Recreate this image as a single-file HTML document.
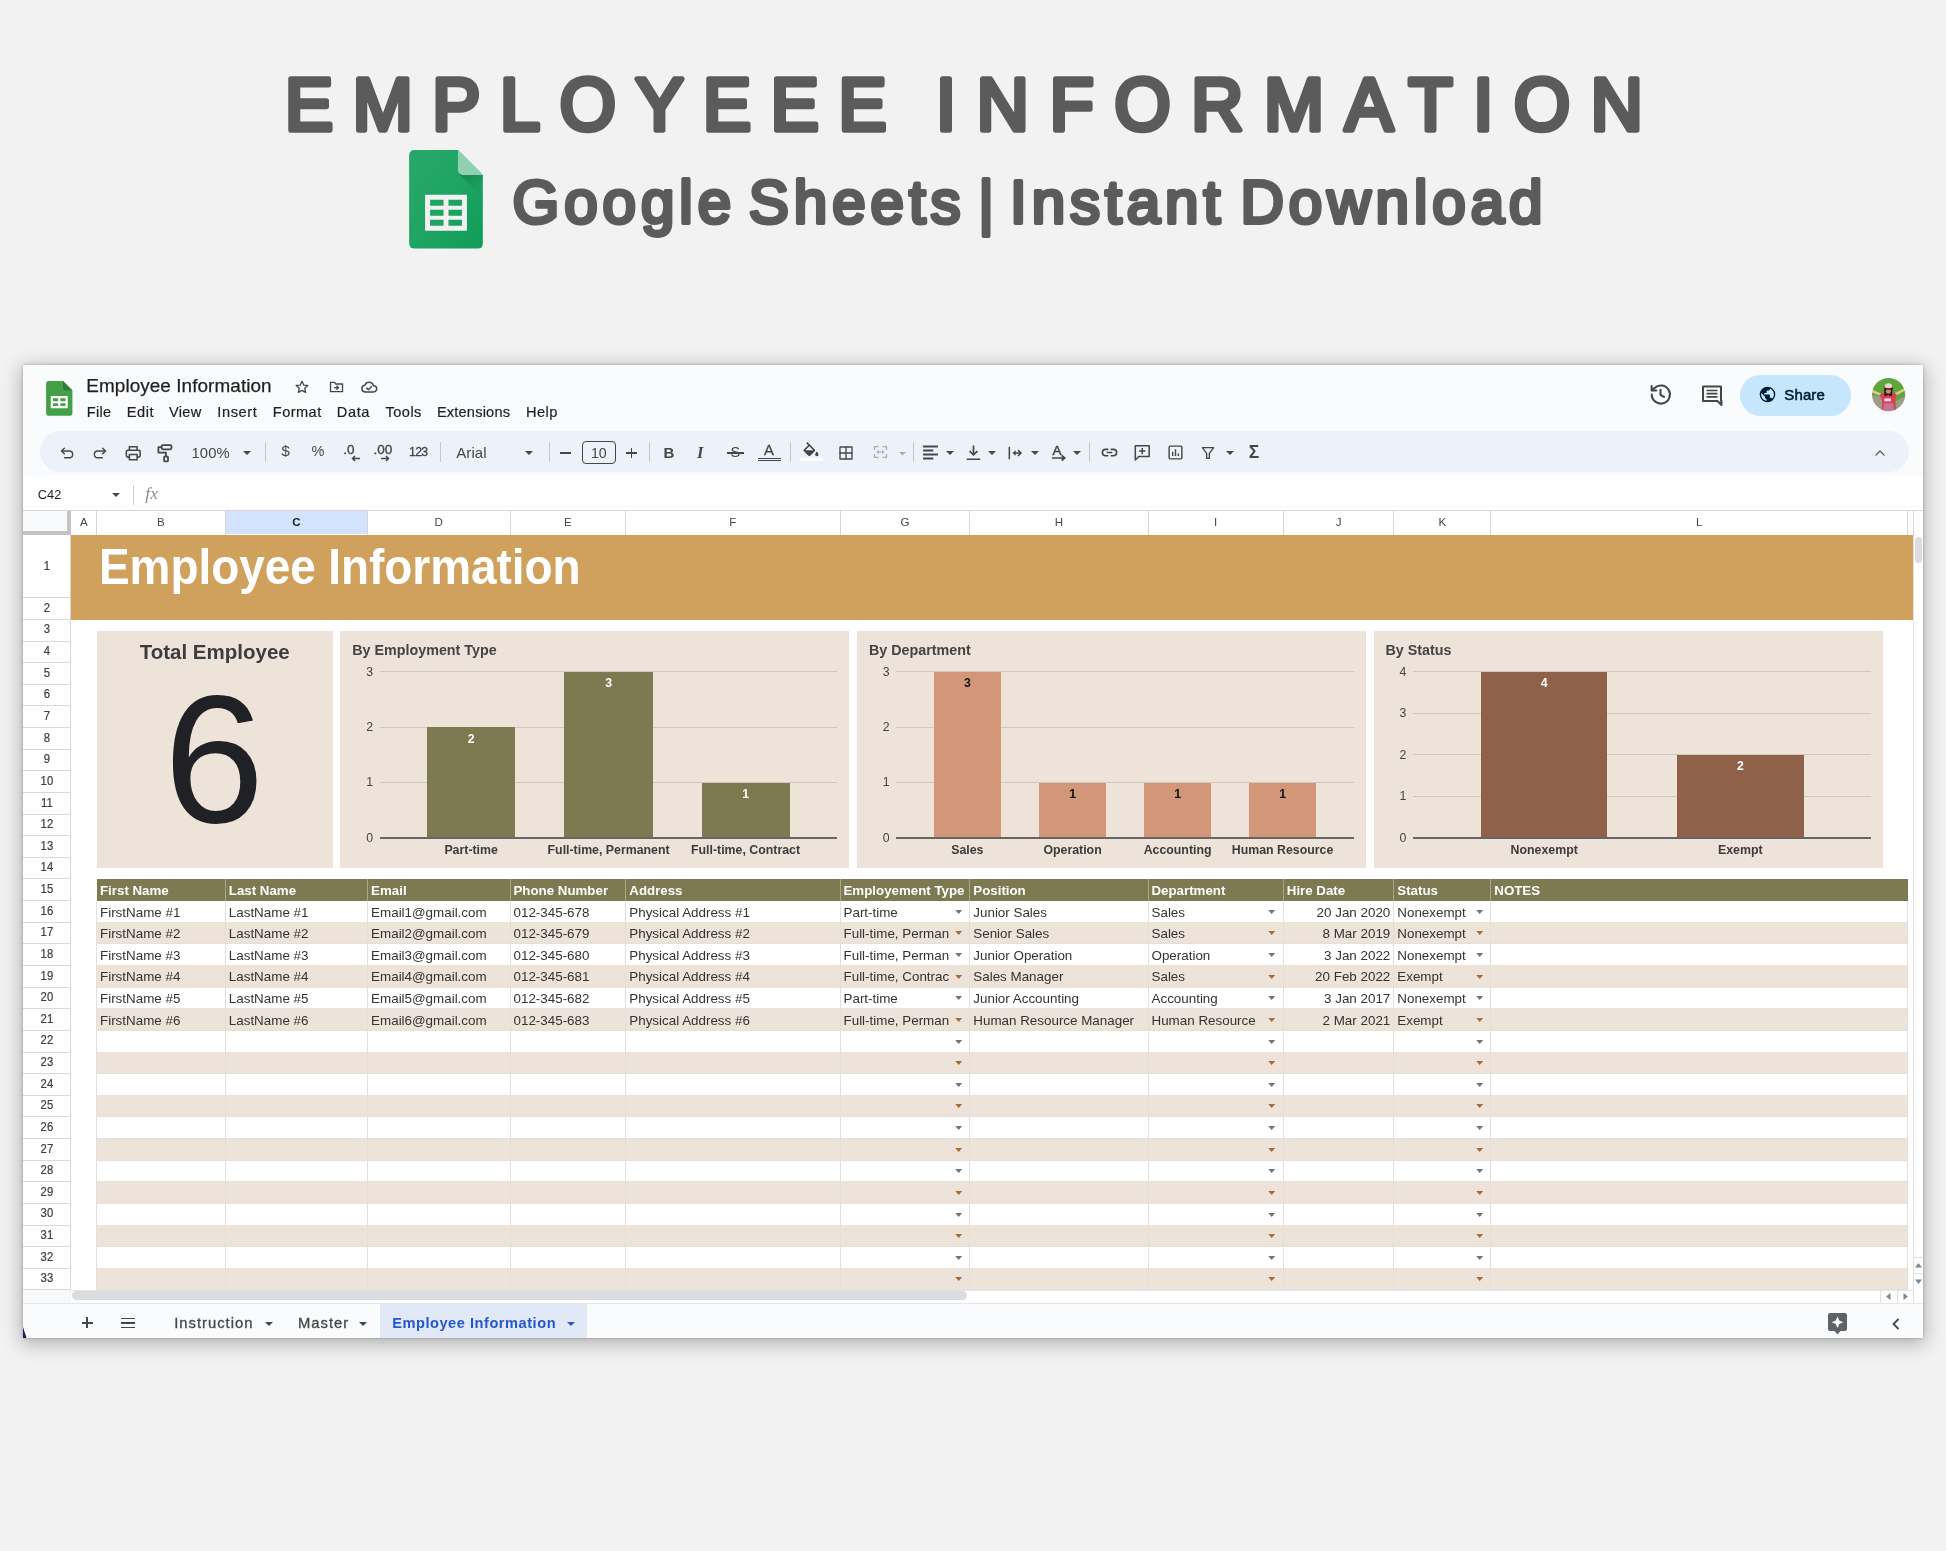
<!DOCTYPE html><html lang="en"><head><meta charset="utf-8"><title>Employee Information</title><style>
*{box-sizing:border-box;margin:0;padding:0}
html,body{width:1946px;height:1551px;overflow:hidden}
body{background:#f2f2f2;font-family:"Liberation Sans",sans-serif;position:relative;color:#202124}
.a{position:absolute;white-space:pre}
.t{position:absolute;white-space:pre;line-height:1}
svg{position:absolute;overflow:visible}
</style></head><body><div id="root" style="position:absolute;left:0;top:0;width:1946px;height:1551px;will-change:transform">
<svg style="left:0;top:0" width="1946" height="300" viewBox="0 0 1946 300">
<g transform="translate(285,129.5) scale(0.96,1)"><text x="0" y="0" font-family="Liberation Sans, sans-serif" font-size="75" letter-spacing="20.5" fill="#5b5b5b" stroke="#5b5b5b" stroke-width="5.5" stroke-linejoin="round">EMPLOYEEE</text></g>
<g transform="translate(936,129.5) scale(0.96,1)"><text x="0" y="0" font-family="Liberation Sans, sans-serif" font-size="75" letter-spacing="21.7" fill="#5b5b5b" stroke="#5b5b5b" stroke-width="5.5" stroke-linejoin="round">INFORMATION</text></g>
<g transform="translate(512.5,223) scale(0.97,1)"><text x="0" y="0" font-family="Liberation Sans, sans-serif" font-size="62" letter-spacing="5.1" word-spacing="-9.3" fill="#5b5b5b" stroke="#5b5b5b" stroke-width="4.1" stroke-linejoin="round">Google Sheets |</text></g>
<g transform="translate(1010,223) scale(0.97,1)"><text x="0" y="0" font-family="Liberation Sans, sans-serif" font-size="62" letter-spacing="5.1" word-spacing="-6.5" fill="#5b5b5b" stroke="#5b5b5b" stroke-width="4.1" stroke-linejoin="round">Instant Download</text></g>
</svg>
<svg style="left:409px;top:150.400px" width="74" height="98.600" viewBox="0 0 74 99">
<defs><linearGradient id="gsb" x1="0" y1="0" x2="1" y2="1"><stop offset="0" stop-color="#27a86a"/><stop offset=".5" stop-color="#1fa463"/><stop offset="1" stop-color="#0f9d58"/></linearGradient>
<linearGradient id="gss" x1="0.300" y1="0" x2="0.800" y2="0.700"><stop offset="0" stop-color="#0b6e3c" stop-opacity=".45"/><stop offset="1" stop-color="#0b6e3c" stop-opacity="0"/></linearGradient></defs>
<path d="M5 0H49L74 25V94a5 5 0 0 1-5 5H5a5 5 0 0 1-5-5V5a5 5 0 0 1 5-5z" fill="url(#gsb)"/>
<path d="M50 24L74 47V25z" fill="url(#gss)"/>
<path d="M49 0L74 25H54a5 5 0 0 1-5-5z" fill="#8ed1b1"/>
<path d="M16 45v36h42V45zm5 5h13.500v6H21zm18.500 0H53v6H39.500zM21 60h13.500v6H21zm18.500 0H53v6H39.500zM21 70h13.500v6H21zm18.500 0H53v6H39.500z" fill="#f1f1f1" fill-rule="evenodd"/>
</svg>
<div class="a" style="left:23px;top:365px;width:1900px;height:973px;background:#ffffff;box-shadow:0 4px 18px 2px rgba(0,0,0,.27),0 0 3px rgba(0,0,0,.25);"></div>
<div class="a" style="left:23px;top:365px;width:1900px;height:111px;background:#f9fbfd;"></div>
<svg style="left:45.800px;top:381px" width="26.500" height="34.800" viewBox="0 0 28 37">
<path d="M3 0H18L28 10V34a3 3 0 0 1-3 3H3a3 3 0 0 1-3-3V3a3 3 0 0 1 3-3z" fill="#43a047"/>
<path d="M18 0L28 10H20.500a2.500 2.500 0 0 1-2.500-2.500z" fill="#2e7d32"/>
<path d="M5 16v13h18V16zm2.300 2.300h5.500v3.100H7.300zm7.900 0h5.500v3.100h-5.500zM7.300 23.600h5.500v3.100H7.300zm7.900 0h5.500v3.100h-5.500z" fill="#fff" fill-rule="evenodd"/>
</svg>
<div class="t" style="left:86.3px;top:377px;font-size:18.9px;color:#1f1f1f;letter-spacing:0.081px;-webkit-text-stroke:.25px #1f1f1f;">Employee Information</div>
<svg style="left:294px;top:378.800px" width="16" height="16" viewBox="0 0 24 24" fill="none" stroke="#444746" stroke-width="2" stroke-linejoin="round"><path d="M12 3.500l2.600 5.600 6.100.700-4.500 4.200 1.200 6-5.400-3-5.400 3 1.200-6L3.300 9.800l6.100-.700z"/></svg>
<svg style="left:328px;top:378.800px" width="17" height="16" viewBox="0 0 24 24" fill="none" stroke="#444746" stroke-width="2" stroke-linejoin="round"><path d="M3 5h6l2 2.500h10V19H3z"/><path d="M9 13h6m-2.500-2.500L15 13l-2.500 2.500" stroke-linecap="round"/></svg>
<svg style="left:359px;top:377.800px" width="20" height="18" viewBox="0 0 24 24" fill="none" stroke="#444746" stroke-width="2" stroke-linejoin="round" stroke-linecap="round"><path d="M7 18.500a4.500 4.500 0 0 1-.500-8.970A6 6 0 0 1 18 10.500a4 4 0 0 1 .500 8z"/><path d="M9 13.500l2.200 2.200 4-4"/></svg>
<div class="t" style="left:86.8px;top:404.6px;font-size:14.6px;color:#1f1f1f;letter-spacing:0.295px;-webkit-text-stroke:.2px #1f1f1f;">File</div>
<div class="t" style="left:126.7px;top:404.6px;font-size:14.6px;color:#1f1f1f;letter-spacing:0.548px;-webkit-text-stroke:.2px #1f1f1f;">Edit</div>
<div class="t" style="left:169.0px;top:404.6px;font-size:14.6px;color:#1f1f1f;letter-spacing:0.308px;-webkit-text-stroke:.2px #1f1f1f;">View</div>
<div class="t" style="left:217.3px;top:404.6px;font-size:14.6px;color:#1f1f1f;letter-spacing:0.580px;-webkit-text-stroke:.2px #1f1f1f;">Insert</div>
<div class="t" style="left:272.8px;top:404.6px;font-size:14.6px;color:#1f1f1f;letter-spacing:0.436px;-webkit-text-stroke:.2px #1f1f1f;">Format</div>
<div class="t" style="left:336.7px;top:404.6px;font-size:14.6px;color:#1f1f1f;letter-spacing:0.657px;-webkit-text-stroke:.2px #1f1f1f;">Data</div>
<div class="t" style="left:385.6px;top:404.6px;font-size:14.6px;color:#1f1f1f;letter-spacing:0.430px;-webkit-text-stroke:.2px #1f1f1f;">Tools</div>
<div class="t" style="left:436.90000000000003px;top:404.6px;font-size:14.6px;color:#1f1f1f;letter-spacing:0.190px;-webkit-text-stroke:.2px #1f1f1f;">Extensions</div>
<div class="t" style="left:526.0999999999999px;top:404.6px;font-size:14.6px;color:#1f1f1f;letter-spacing:0.428px;-webkit-text-stroke:.2px #1f1f1f;">Help</div>
<svg style="left:1648px;top:382px" width="25" height="25" viewBox="0 0 24 24" fill="none" stroke="#444746" stroke-width="2" stroke-linecap="round" stroke-linejoin="round"><path d="M3.600 12a8.700 8.700 0 1 0 2.700-6.300L3.800 8"/><path d="M3.500 3.800V8.200H8"/><path d="M12 7.500V12.300l3.300 2"/></svg>
<svg style="left:1700px;top:383px" width="24" height="24" viewBox="0 0 24 24"><path d="M3 3.500h18v14.500H21.500V22l-4-4H3z" fill="none" stroke="#444746" stroke-width="2" stroke-linejoin="round"/><path d="M6.500 7.500h11M6.500 10.700h11M6.500 13.900h11" stroke="#444746" stroke-width="1.700"/></svg>
<div class="a" style="left:1740.3px;top:374.5px;width:110.5px;height:41px;background:#c6e6fd;border-radius:21px;"></div>
<svg style="left:1758.500px;top:386px" width="17" height="17" viewBox="0 0 24 24"><circle cx="12" cy="12" r="11" fill="#001d35"/><path d="M10.800 20.900c-4.400-.600-7.800-4.400-7.800-8.900 0-.700.100-1.400.200-2L8.500 15.300v1.100c0 1.200 1 2.200 2.300 2.200zm7.800-2.800c-.300-.900-1.100-1.600-2.100-1.600h-1.100v-3.400c0-.600-.500-1.100-1.100-1.100H7.500V9.800h2.300c.600 0 1.100-.500 1.100-1.100V6.400h2.300c1.200 0 2.200-1 2.200-2.200v-.500c3.300 1.300 5.600 4.600 5.600 8.300 0 2.400-.900 4.500-2.400 6.100z" fill="#c2e7ff"/></svg>
<div class="t" style="left:1784.3px;top:387.3px;font-size:15px;color:#001d35;letter-spacing:0.117px;-webkit-text-stroke:.55px #001d35;">Share</div>
<svg style="left:1871.800px;top:378.300px" width="33.200" height="33.200" viewBox="0 0 33 33"><defs><clipPath id="av"><circle cx="16.500" cy="16.500" r="16.500"/></clipPath><filter id="avb" x="-10%" y="-10%" width="120%" height="120%"><feGaussianBlur stdDeviation=".55"/></filter></defs><g clip-path="url(#av)"><g filter="url(#avb)"><rect x="-2" y="-2" width="37" height="37" fill="#5fa53a"/><path d="M-2 17.500C4 16.500 8 19 10 20v15h-12zM35 19c-5 0-8 2-11 4v12h11z" fill="#9c9c8c"/><path d="M0 13l8.500 3.500M32 11.500L24 16" stroke="#dcc98e" stroke-width="2.600" stroke-linecap="round" fill="none"/><path d="M7.500 16.500l4-1.500h9.500l3.500 .8-1.500 6 .5 12H9.500l.8-11z" fill="#e23b57"/><path d="M12 25h9l1 9h-11z" fill="#b58aa8" opacity=".8"/><path d="M12.300 20.500h6.500v2.500h-6.500z" fill="#f6e4ea"/><path d="M12.200 10.500h8.200v2l-.5 5.500h-2l-1.800-1.500-1.800 1.500h-2z" fill="#2b1715"/><circle cx="16.300" cy="13.200" r="2.500" fill="#c9896a"/><ellipse cx="16.400" cy="7.800" rx="3.500" ry="2.700" fill="#ecd3d6"/><path d="M11.800 9.400q4.600 1.800 9.300 0v1.500q-4.600 1.600-9.300 0z" fill="#4a2326"/></g></g></svg>
<div class="a" style="left:40px;top:430.8px;width:1869px;height:41.6px;background:#edf2fa;border-radius:21px;"></div>
<svg style="left:59.1px;top:445.0px" width="17" height="17" viewBox="0 0 24 24" fill="none" stroke="#444746" stroke-width="2" stroke-linecap="round" stroke-linejoin="round" ><path d="M7.500 4.500L3.500 8.500l4 4"/><path d="M4 8.500h10.500a4.750 4.750 0 0 1 0 9.500H8"/></svg>
<svg style="left:90.7px;top:445.0px" width="17" height="17" viewBox="0 0 24 24" fill="none" stroke="#444746" stroke-width="2" stroke-linecap="round" stroke-linejoin="round" ><path d="M16.500 4.500l4 4-4 4"/><path d="M20 8.500H9.500a4.750 4.750 0 0 0 0 9.500H16"/></svg>
<svg style="left:123.8px;top:443.8px" width="18.5" height="18.5" viewBox="0 0 24 24" fill="none" stroke="#444746" stroke-width="2" stroke-linecap="round" stroke-linejoin="round" ><path d="M7 8V3.500h10V8"/><rect x="3" y="8" width="18" height="9" rx="2"/><rect x="7" y="13.500" width="10" height="7" fill="#edf2fa"/></svg>
<svg style="left:156px;top:443px" width="18" height="20" viewBox="156 443 18 20" fill="none" stroke="#444746" stroke-width="1.800" stroke-linejoin="round"><rect x="161.600" y="445.200" width="9.900" height="4.100" rx="1.200"/><path d="M161.600 447.200H158.400V452.600H165.900V456.500"/><rect x="164.100" y="456.500" width="3.900" height="4.900" rx="1"/></svg>
<div class="t" style="left:191.4px;top:446.4px;font-size:14.8px;color:#444746;letter-spacing:0.147px;">100%</div>
<svg style="left:242.8px;top:451.3px" width="8" height="4.0" viewBox="0 0 10 5"><path d="M0 0h10L5 5z" fill="#444746"/></svg>
<div class="a" style="left:264.9px;top:442.0px;width:1px;height:20px;background:#c7c7c7;"></div>
<div class="t" style="left:281.6px;top:443.0px;font-size:15px;color:#444746;">$</div>
<div class="t" style="left:311.6px;top:444.0px;font-size:14.5px;color:#444746;">%</div>
<div class="t" style="left:343.3px;top:442.8px;font-size:13.5px;color:#444746;-webkit-text-stroke:.35px #444746;">.0</div>
<svg style="left:351px;top:455px" width="9" height="7" viewBox="0 0 9 7" fill="none" stroke="#444746" stroke-width="1.500"><path d="M9 3.500H1.500M4 1L1.500 3.500 4 6"/></svg>
<div class="t" style="left:373.6px;top:442.8px;font-size:13.5px;color:#444746;-webkit-text-stroke:.35px #444746;">.00</div>
<svg style="left:381px;top:455px" width="9" height="7" viewBox="0 0 9 7" fill="none" stroke="#444746" stroke-width="1.500"><path d="M0 3.500h7.500M5 1l2.500 2.500L5 6"/></svg>
<div class="t" style="left:409px;top:446.2px;font-size:12.3px;color:#444746;letter-spacing:-0.666px;-webkit-text-stroke:.3px #444746;">123</div>
<div class="a" style="left:439.5px;top:442.0px;width:1px;height:20px;background:#c7c7c7;"></div>
<div class="t" style="left:456.3px;top:445.2px;font-size:15px;color:#444746;letter-spacing:0.046px;">Arial</div>
<svg style="left:524.8px;top:451.3px" width="8" height="4.0" viewBox="0 0 10 5"><path d="M0 0h10L5 5z" fill="#444746"/></svg>
<div class="a" style="left:548.5px;top:442.0px;width:1px;height:20px;background:#c7c7c7;"></div>
<div class="a" style="left:560.3px;top:452px;width:10.4px;height:1.9px;background:#444746;"></div>
<div class="a" style="left:581.7px;top:440.6px;width:34.3px;height:23.7px;background:transparent;border:1.300px solid #444746;border-radius:4px;"></div>
<div class="t" style="left:298.79999999999995px;width:600px;text-align:center;top:445.60px;font-size:14.2px;color:#444746;">10</div>
<div class="a" style="left:626.2px;top:452px;width:10.6px;height:1.9px;background:#444746;"></div>
<div class="a" style="left:630.55px;top:447.7px;width:1.9px;height:10.6px;background:#444746;"></div>
<div class="a" style="left:648.5px;top:442.0px;width:1px;height:20px;background:#c7c7c7;"></div>
<div class="t" style="left:663.5px;top:444.5px;font-size:15px;color:#444746;font-weight:bold;">B</div>
<div class="t" style="left:697px;top:444.5px;font-size:15px;color:#444746;font-style:italic;font-family:'Liberation Serif',serif;font-weight:bold;font-size:16.500px">I</div>
<div class="t" style="left:730.5px;top:445px;font-size:14.5px;color:#444746;">S</div>
<div class="a" style="left:727px;top:452px;width:16.5px;height:1.5px;background:#444746;"></div>
<div class="t" style="left:764.0px;top:443.3px;font-size:14.8px;color:#444746;-webkit-text-stroke:.3px #444746;">A</div>
<div class="a" style="left:757.6px;top:458.0px;width:23.4px;height:1.4px;background:#444746;"></div>
<div class="a" style="left:757.6px;top:460.1px;width:23.4px;height:1.4px;background:#444746;"></div>
<div class="a" style="left:790.1px;top:442.0px;width:1px;height:20px;background:#c7c7c7;"></div>
<svg style="left:800.800px;top:441.600px" width="20" height="20" viewBox="0 0 24 24"><path d="M16.560 8.940 7.620 0 6.210 1.410l2.380 2.380-5.150 5.150c-.590.590-.590 1.540 0 2.120l5.500 5.500c.290.290.680.440 1.060.440s.770-.150 1.060-.440l5.500-5.500c.590-.580.590-1.530 0-2.120zM5.210 10 10 5.210 14.790 10H5.210zM19 11.500s-2 2.170-2 3.500c0 1.100.900 2 2 2s2-.900 2-2c0-1.330-2-3.500-2-3.500z" fill="#444746"/></svg>
<div class="a" style="left:799.8px;top:458.2px;width:23.4px;height:3.2px;background:#ffffff;"></div>
<svg style="left:837.5px;top:444.8px" width="16" height="16" viewBox="0 0 24 24" fill="none" stroke="#444746" stroke-width="2" stroke-linecap="round" stroke-linejoin="round" ><rect x="3" y="3" width="18" height="18"/><path d="M12 3v18M3 12h18"/></svg>
<svg style="left:872px;top:444.300px" width="17" height="16" viewBox="0 0 24 24" fill="none" stroke="#a9acb0" stroke-width="2"><path d="M3 9V4h6M15 4h6v5M21 15v5h-6M9 20H3v-5" /><path d="M7 12h10M9.500 9.500L7 12l2.500 2.500M14.500 9.500L17 12l-2.500 2.500" stroke-width="1.600"/></svg>
<svg style="left:899.0px;top:451.6px" width="7" height="3.5" viewBox="0 0 10 5"><path d="M0 0h10L5 5z" fill="#a9acb0"/></svg>
<div class="a" style="left:912.5px;top:442.0px;width:1px;height:20px;background:#c7c7c7;"></div>
<svg style="left:922.4px;top:444.0px" width="17" height="17" viewBox="0 0 24 24" fill="none" stroke="#444746" stroke-width="2" stroke-linecap="round" stroke-linejoin="round" ><path d="M1.500 3.500h21M1.500 9.200h14.500M1.500 14.800h21M1.500 20.500h14.500" stroke-linecap="butt" stroke-width="2.700"/></svg>
<svg style="left:945.8px;top:451.3px" width="8" height="4.0" viewBox="0 0 10 5"><path d="M0 0h10L5 5z" fill="#444746"/></svg>
<svg style="left:965.0px;top:444.0px" width="17" height="17" viewBox="0 0 24 24" fill="none" stroke="#444746" stroke-width="2" stroke-linecap="round" stroke-linejoin="round" ><path d="M12 2v13M6.500 10l5.500 5.500L17.500 10M2.500 21.500h19" stroke-linecap="butt" stroke-width="2.400"/></svg>
<svg style="left:988.0px;top:451.3px" width="8" height="4.0" viewBox="0 0 10 5"><path d="M0 0h10L5 5z" fill="#444746"/></svg>
<svg style="left:1006.7px;top:444.8px" width="16" height="16" viewBox="0 0 24 24" fill="none" stroke="#444746" stroke-width="2" stroke-linecap="round" stroke-linejoin="round" ><path d="M3.500 2.500v19M8.500 12h12.500M16.500 7.500l4.500 4.500-4.500 4.500M12 8.500v7" stroke-linecap="butt" stroke-width="2.300"/></svg>
<svg style="left:1030.5px;top:451.3px" width="8" height="4.0" viewBox="0 0 10 5"><path d="M0 0h10L5 5z" fill="#444746"/></svg>
<div class="t" style="left:1052.6px;top:443.6px;font-size:13.5px;color:#444746;-webkit-text-stroke:.5px #444746;">A</div>
<svg style="left:1051.500px;top:454.600px" width="15" height="6" viewBox="0 0 15 6" fill="none" stroke="#444746" stroke-width="1.700"><path d="M0 3h12.500M9.700 .5l3 2.500-3 2.500"/></svg>
<svg style="left:1072.5px;top:451.3px" width="8" height="4.0" viewBox="0 0 10 5"><path d="M0 0h10L5 5z" fill="#444746"/></svg>
<div class="a" style="left:1089.2px;top:442.0px;width:1px;height:20px;background:#c7c7c7;"></div>
<svg style="left:1099.5px;top:443.3px" width="19" height="19" viewBox="0 0 24 24" fill="none" stroke="#444746" stroke-width="2" stroke-linecap="round" stroke-linejoin="round" ><path d="M10.500 8H7a4 4 0 0 0 0 8h3.500M13.500 8H17a4 4 0 0 1 0 8h-3.500M8.500 12h7" stroke-linecap="butt"/></svg>
<svg style="left:1133.3px;top:443.4px" width="18.5" height="18.5" viewBox="0 0 24 24" fill="none" stroke="#444746" stroke-width="2" stroke-linecap="round" stroke-linejoin="round" ><path d="M3 3.500h18v14H7.500L3 22z"/><path d="M12 6.500v8M8 10.500h8" stroke-linecap="butt"/></svg>
<svg style="left:1166.8px;top:444.3px" width="17" height="17" viewBox="0 0 24 24" fill="none" stroke="#444746" stroke-width="2" stroke-linecap="round" stroke-linejoin="round" ><rect x="3" y="3" width="18" height="18" rx="1.500"/><path d="M8 17v-6M12 17V7.500M16 17v-3.500" stroke-linecap="butt"/></svg>
<svg style="left:1199.8px;top:444.8px" width="16" height="16" viewBox="0 0 24 24" fill="none" stroke="#444746" stroke-width="2" stroke-linecap="round" stroke-linejoin="round" ><path d="M3.500 4h17l-6.500 8.500V20h-4v-7.500z"/></svg>
<svg style="left:1226.0px;top:451.3px" width="8" height="4.0" viewBox="0 0 10 5"><path d="M0 0h10L5 5z" fill="#444746"/></svg>
<div class="t" style="left:1248.8px;top:444.2px;font-size:17.5px;color:#444746;font-weight:bold;">Σ</div>
<svg style="left:1872.6px;top:445.8px" width="14" height="14" viewBox="0 0 24 24" fill="none" stroke="#444746" stroke-width="2" stroke-linecap="round" stroke-linejoin="round" ><path d="M5 15.500l7-7 7 7"/></svg>
<div class="a" style="left:23px;top:476px;width:1900px;height:34px;background:#ffffff;"></div>
<div class="t" style="left:37.8px;top:488.5px;font-size:12.8px;color:#1f1f1f;width:24.200px;text-align:justify;text-align-last:justify;">C42</div>
<svg style="left:112.3px;top:492.8px" width="8" height="4.0" viewBox="0 0 10 5"><path d="M0 0h10L5 5z" fill="#444746"/></svg>
<div class="a" style="left:133px;top:484.5px;width:1px;height:20px;background:#d0d0d0;"></div>
<div class="t" style="left:145.3px;top:485.2px;font-size:17.5px;color:#868b90;font-style:italic;font-family:'Liberation Serif',serif;letter-spacing:.2px">fx</div>
<div class="a" style="left:23px;top:510px;width:1900px;height:24.5px;background:#ffffff;"></div>
<div class="a" style="left:23px;top:509.5px;width:1900px;height:1px;background:#d5d5d5;"></div>
<div class="a" style="left:225.3px;top:510.5px;width:142.3px;height:23.5px;background:#d3e3fd;"></div>
<div class="a" style="left:23px;top:510.5px;width:44px;height:21px;background:#f8f9fa;"></div>
<div class="a" style="left:67px;top:510.5px;width:4px;height:24px;background:#c4c4c4;"></div>
<div class="a" style="left:23px;top:531px;width:48px;height:3.5px;background:#c4c4c4;"></div>
<div class="t" style="left:-216.25px;width:600px;text-align:center;top:515.90px;font-size:11.6px;color:#444746;">A</div>
<div class="a" style="left:96.0px;top:510.5px;width:1px;height:24px;background:#d5d5d5;"></div>
<div class="t" style="left:-139.1px;width:600px;text-align:center;top:515.90px;font-size:11.6px;color:#444746;">B</div>
<div class="a" style="left:224.8px;top:510.5px;width:1px;height:24px;background:#d5d5d5;"></div>
<div class="t" style="left:-3.5499999999999545px;width:600px;text-align:center;top:515.90px;font-size:11.6px;color:#1f1f1f;font-weight:bold;">C</div>
<div class="a" style="left:367.1px;top:510.5px;width:1px;height:24px;background:#d5d5d5;"></div>
<div class="t" style="left:138.8px;width:600px;text-align:center;top:515.90px;font-size:11.6px;color:#444746;">D</div>
<div class="a" style="left:509.5px;top:510.5px;width:1px;height:24px;background:#d5d5d5;"></div>
<div class="t" style="left:267.9px;width:600px;text-align:center;top:515.90px;font-size:11.6px;color:#444746;">E</div>
<div class="a" style="left:625.3px;top:510.5px;width:1px;height:24px;background:#d5d5d5;"></div>
<div class="t" style="left:432.9px;width:600px;text-align:center;top:515.90px;font-size:11.6px;color:#444746;">F</div>
<div class="a" style="left:839.5px;top:510.5px;width:1px;height:24px;background:#d5d5d5;"></div>
<div class="t" style="left:604.9px;width:600px;text-align:center;top:515.90px;font-size:11.6px;color:#444746;">G</div>
<div class="a" style="left:969.3px;top:510.5px;width:1px;height:24px;background:#d5d5d5;"></div>
<div class="t" style="left:758.9000000000001px;width:600px;text-align:center;top:515.90px;font-size:11.6px;color:#444746;">H</div>
<div class="a" style="left:1147.5px;top:510.5px;width:1px;height:24px;background:#d5d5d5;"></div>
<div class="t" style="left:915.6500000000001px;width:600px;text-align:center;top:515.90px;font-size:11.6px;color:#444746;">I</div>
<div class="a" style="left:1282.8px;top:510.5px;width:1px;height:24px;background:#d5d5d5;"></div>
<div class="t" style="left:1038.55px;width:600px;text-align:center;top:515.90px;font-size:11.6px;color:#444746;">J</div>
<div class="a" style="left:1393.3px;top:510.5px;width:1px;height:24px;background:#d5d5d5;"></div>
<div class="t" style="left:1142.3px;width:600px;text-align:center;top:515.90px;font-size:11.6px;color:#444746;">K</div>
<div class="a" style="left:1490.3px;top:510.5px;width:1px;height:24px;background:#d5d5d5;"></div>
<div class="t" style="left:1399.25px;width:600px;text-align:center;top:515.90px;font-size:11.6px;color:#444746;">L</div>
<div class="a" style="left:1907.2px;top:510.5px;width:1px;height:24px;background:#d5d5d5;"></div>
<div class="a" style="left:1912.5px;top:510.5px;width:1px;height:24px;background:#d5d5d5;"></div>
<div class="a" style="left:23px;top:534.5px;width:47.5px;height:755px;background:#ffffff;"></div>
<div class="a" style="left:70px;top:534.5px;width:1px;height:755px;background:#d5d5d5;"></div>
<div class="a" style="left:23px;top:596.9px;width:47.5px;height:1px;background:#d9d9d9;"></div>
<div class="t" style="left:-253.1px;width:600px;text-align:center;top:561.20px;font-size:11.3px;color:#3c4043;-webkit-text-stroke:.2px #3c4043;transform:scaleY(1.09);">1</div>
<div class="a" style="left:23px;top:618.9px;width:47.5px;height:1px;background:#d9d9d9;"></div>
<div class="t" style="left:-253.1px;width:600px;text-align:center;top:602.65px;font-size:11.3px;color:#3c4043;-webkit-text-stroke:.2px #3c4043;transform:scaleY(1.09);">2</div>
<div class="a" style="left:23px;top:640.53px;width:47.5px;height:1px;background:#d9d9d9;"></div>
<div class="t" style="left:-253.1px;width:600px;text-align:center;top:624.46px;font-size:11.3px;color:#3c4043;-webkit-text-stroke:.2px #3c4043;transform:scaleY(1.09);">3</div>
<div class="a" style="left:23px;top:662.16px;width:47.5px;height:1px;background:#d9d9d9;"></div>
<div class="t" style="left:-253.1px;width:600px;text-align:center;top:646.10px;font-size:11.3px;color:#3c4043;-webkit-text-stroke:.2px #3c4043;transform:scaleY(1.09);">4</div>
<div class="a" style="left:23px;top:683.79px;width:47.5px;height:1px;background:#d9d9d9;"></div>
<div class="t" style="left:-253.1px;width:600px;text-align:center;top:667.72px;font-size:11.3px;color:#3c4043;-webkit-text-stroke:.2px #3c4043;transform:scaleY(1.09);">5</div>
<div class="a" style="left:23px;top:705.42px;width:47.5px;height:1px;background:#d9d9d9;"></div>
<div class="t" style="left:-253.1px;width:600px;text-align:center;top:689.36px;font-size:11.3px;color:#3c4043;-webkit-text-stroke:.2px #3c4043;transform:scaleY(1.09);">6</div>
<div class="a" style="left:23px;top:727.05px;width:47.5px;height:1px;background:#d9d9d9;"></div>
<div class="t" style="left:-253.1px;width:600px;text-align:center;top:710.98px;font-size:11.3px;color:#3c4043;-webkit-text-stroke:.2px #3c4043;transform:scaleY(1.09);">7</div>
<div class="a" style="left:23px;top:748.68px;width:47.5px;height:1px;background:#d9d9d9;"></div>
<div class="t" style="left:-253.1px;width:600px;text-align:center;top:732.62px;font-size:11.3px;color:#3c4043;-webkit-text-stroke:.2px #3c4043;transform:scaleY(1.09);">8</div>
<div class="a" style="left:23px;top:770.31px;width:47.5px;height:1px;background:#d9d9d9;"></div>
<div class="t" style="left:-253.1px;width:600px;text-align:center;top:754.24px;font-size:11.3px;color:#3c4043;-webkit-text-stroke:.2px #3c4043;transform:scaleY(1.09);">9</div>
<div class="a" style="left:23px;top:791.9399999999999px;width:47.5px;height:1px;background:#d9d9d9;"></div>
<div class="t" style="left:-253.1px;width:600px;text-align:center;top:775.88px;font-size:11.3px;color:#3c4043;-webkit-text-stroke:.2px #3c4043;transform:scaleY(1.09);">10</div>
<div class="a" style="left:23px;top:813.5699999999999px;width:47.5px;height:1px;background:#d9d9d9;"></div>
<div class="t" style="left:-253.1px;width:600px;text-align:center;top:797.50px;font-size:11.3px;color:#3c4043;-webkit-text-stroke:.2px #3c4043;transform:scaleY(1.09);">11</div>
<div class="a" style="left:23px;top:835.1999999999999px;width:47.5px;height:1px;background:#d9d9d9;"></div>
<div class="t" style="left:-253.1px;width:600px;text-align:center;top:819.13px;font-size:11.3px;color:#3c4043;-webkit-text-stroke:.2px #3c4043;transform:scaleY(1.09);">12</div>
<div class="a" style="left:23px;top:856.8299999999999px;width:47.5px;height:1px;background:#d9d9d9;"></div>
<div class="t" style="left:-253.1px;width:600px;text-align:center;top:840.76px;font-size:11.3px;color:#3c4043;-webkit-text-stroke:.2px #3c4043;transform:scaleY(1.09);">13</div>
<div class="a" style="left:23px;top:878.46px;width:47.5px;height:1px;background:#d9d9d9;"></div>
<div class="t" style="left:-253.1px;width:600px;text-align:center;top:862.39px;font-size:11.3px;color:#3c4043;-webkit-text-stroke:.2px #3c4043;transform:scaleY(1.09);">14</div>
<div class="a" style="left:23px;top:900.0899999999999px;width:47.5px;height:1px;background:#d9d9d9;"></div>
<div class="t" style="left:-253.1px;width:600px;text-align:center;top:884.02px;font-size:11.3px;color:#3c4043;-webkit-text-stroke:.2px #3c4043;transform:scaleY(1.09);">15</div>
<div class="a" style="left:23px;top:921.72px;width:47.5px;height:1px;background:#d9d9d9;"></div>
<div class="t" style="left:-253.1px;width:600px;text-align:center;top:905.65px;font-size:11.3px;color:#3c4043;-webkit-text-stroke:.2px #3c4043;transform:scaleY(1.09);">16</div>
<div class="a" style="left:23px;top:943.3499999999999px;width:47.5px;height:1px;background:#d9d9d9;"></div>
<div class="t" style="left:-253.1px;width:600px;text-align:center;top:927.28px;font-size:11.3px;color:#3c4043;-webkit-text-stroke:.2px #3c4043;transform:scaleY(1.09);">17</div>
<div class="a" style="left:23px;top:964.98px;width:47.5px;height:1px;background:#d9d9d9;"></div>
<div class="t" style="left:-253.1px;width:600px;text-align:center;top:948.91px;font-size:11.3px;color:#3c4043;-webkit-text-stroke:.2px #3c4043;transform:scaleY(1.09);">18</div>
<div class="a" style="left:23px;top:986.6099999999999px;width:47.5px;height:1px;background:#d9d9d9;"></div>
<div class="t" style="left:-253.1px;width:600px;text-align:center;top:970.54px;font-size:11.3px;color:#3c4043;-webkit-text-stroke:.2px #3c4043;transform:scaleY(1.09);">19</div>
<div class="a" style="left:23px;top:1008.24px;width:47.5px;height:1px;background:#d9d9d9;"></div>
<div class="t" style="left:-253.1px;width:600px;text-align:center;top:992.17px;font-size:11.3px;color:#3c4043;-webkit-text-stroke:.2px #3c4043;transform:scaleY(1.09);">20</div>
<div class="a" style="left:23px;top:1029.87px;width:47.5px;height:1px;background:#d9d9d9;"></div>
<div class="t" style="left:-253.1px;width:600px;text-align:center;top:1013.80px;font-size:11.3px;color:#3c4043;-webkit-text-stroke:.2px #3c4043;transform:scaleY(1.09);">21</div>
<div class="a" style="left:23px;top:1051.5px;width:47.5px;height:1px;background:#d9d9d9;"></div>
<div class="t" style="left:-253.1px;width:600px;text-align:center;top:1035.43px;font-size:11.3px;color:#3c4043;-webkit-text-stroke:.2px #3c4043;transform:scaleY(1.09);">22</div>
<div class="a" style="left:23px;top:1073.1299999999999px;width:47.5px;height:1px;background:#d9d9d9;"></div>
<div class="t" style="left:-253.1px;width:600px;text-align:center;top:1057.07px;font-size:11.3px;color:#3c4043;-webkit-text-stroke:.2px #3c4043;transform:scaleY(1.09);">23</div>
<div class="a" style="left:23px;top:1094.76px;width:47.5px;height:1px;background:#d9d9d9;"></div>
<div class="t" style="left:-253.1px;width:600px;text-align:center;top:1078.69px;font-size:11.3px;color:#3c4043;-webkit-text-stroke:.2px #3c4043;transform:scaleY(1.09);">24</div>
<div class="a" style="left:23px;top:1116.3899999999999px;width:47.5px;height:1px;background:#d9d9d9;"></div>
<div class="t" style="left:-253.1px;width:600px;text-align:center;top:1100.32px;font-size:11.3px;color:#3c4043;-webkit-text-stroke:.2px #3c4043;transform:scaleY(1.09);">25</div>
<div class="a" style="left:23px;top:1138.02px;width:47.5px;height:1px;background:#d9d9d9;"></div>
<div class="t" style="left:-253.1px;width:600px;text-align:center;top:1121.95px;font-size:11.3px;color:#3c4043;-webkit-text-stroke:.2px #3c4043;transform:scaleY(1.09);">26</div>
<div class="a" style="left:23px;top:1159.65px;width:47.5px;height:1px;background:#d9d9d9;"></div>
<div class="t" style="left:-253.1px;width:600px;text-align:center;top:1143.59px;font-size:11.3px;color:#3c4043;-webkit-text-stroke:.2px #3c4043;transform:scaleY(1.09);">27</div>
<div class="a" style="left:23px;top:1181.28px;width:47.5px;height:1px;background:#d9d9d9;"></div>
<div class="t" style="left:-253.1px;width:600px;text-align:center;top:1165.22px;font-size:11.3px;color:#3c4043;-webkit-text-stroke:.2px #3c4043;transform:scaleY(1.09);">28</div>
<div class="a" style="left:23px;top:1202.9099999999999px;width:47.5px;height:1px;background:#d9d9d9;"></div>
<div class="t" style="left:-253.1px;width:600px;text-align:center;top:1186.84px;font-size:11.3px;color:#3c4043;-webkit-text-stroke:.2px #3c4043;transform:scaleY(1.09);">29</div>
<div class="a" style="left:23px;top:1224.54px;width:47.5px;height:1px;background:#d9d9d9;"></div>
<div class="t" style="left:-253.1px;width:600px;text-align:center;top:1208.47px;font-size:11.3px;color:#3c4043;-webkit-text-stroke:.2px #3c4043;transform:scaleY(1.09);">30</div>
<div class="a" style="left:23px;top:1246.17px;width:47.5px;height:1px;background:#d9d9d9;"></div>
<div class="t" style="left:-253.1px;width:600px;text-align:center;top:1230.11px;font-size:11.3px;color:#3c4043;-webkit-text-stroke:.2px #3c4043;transform:scaleY(1.09);">31</div>
<div class="a" style="left:23px;top:1267.8px;width:47.5px;height:1px;background:#d9d9d9;"></div>
<div class="t" style="left:-253.1px;width:600px;text-align:center;top:1251.74px;font-size:11.3px;color:#3c4043;-webkit-text-stroke:.2px #3c4043;transform:scaleY(1.09);">32</div>
<div class="a" style="left:23px;top:1289.4299999999998px;width:47.5px;height:1px;background:#d9d9d9;"></div>
<div class="t" style="left:-253.1px;width:600px;text-align:center;top:1273.36px;font-size:11.3px;color:#3c4043;-webkit-text-stroke:.2px #3c4043;transform:scaleY(1.09);">33</div>
<div class="a" style="left:71px;top:534.5px;width:1842px;height:85px;background:#cfa15c;"></div>
<div class="t" style="left:99.0px;top:541.5px;font-size:49.4px;color:#ffffff;font-weight:bold;letter-spacing:-0.079px;transform:scaleX(0.931);transform-origin:0 0;">Employee Information</div>
<div class="a" style="left:1913px;top:534.5px;width:10px;height:755px;background:#ffffff;"></div>
<div class="a" style="left:1913px;top:534.5px;width:1px;height:755px;background:#e0e0e0;"></div>
<div class="a" style="left:1914.5px;top:537px;width:7px;height:26px;background:#dadce0;border-radius:4px;"></div>
<div class="a" style="left:96.5px;top:878.96px;width:1811.2px;height:21.63px;background:#7d7a52;"></div>
<div class="t" style="left:100.0px;top:883.5600000000001px;font-size:13.3px;color:#ffffff;font-weight:bold;">First Name</div>
<div class="t" style="left:228.8px;top:883.5600000000001px;font-size:13.3px;color:#ffffff;font-weight:bold;">Last Name</div>
<div class="a" style="left:224.8px;top:878.96px;width:1px;height:21.63px;background:#a9a78a;"></div>
<div class="t" style="left:371.1px;top:883.5600000000001px;font-size:13.3px;color:#ffffff;font-weight:bold;">Email</div>
<div class="a" style="left:367.1px;top:878.96px;width:1px;height:21.63px;background:#a9a78a;"></div>
<div class="t" style="left:513.5px;top:883.5600000000001px;font-size:13.3px;color:#ffffff;font-weight:bold;">Phone Number</div>
<div class="a" style="left:509.5px;top:878.96px;width:1px;height:21.63px;background:#a9a78a;"></div>
<div class="t" style="left:629.3px;top:883.5600000000001px;font-size:13.3px;color:#ffffff;font-weight:bold;">Address</div>
<div class="a" style="left:625.3px;top:878.96px;width:1px;height:21.63px;background:#a9a78a;"></div>
<div class="t" style="left:843.5px;top:883.5600000000001px;font-size:13.3px;color:#ffffff;font-weight:bold;">Employement Type</div>
<div class="a" style="left:839.5px;top:878.96px;width:1px;height:21.63px;background:#a9a78a;"></div>
<div class="t" style="left:973.3px;top:883.5600000000001px;font-size:13.3px;color:#ffffff;font-weight:bold;">Position</div>
<div class="a" style="left:969.3px;top:878.96px;width:1px;height:21.63px;background:#a9a78a;"></div>
<div class="t" style="left:1151.5px;top:883.5600000000001px;font-size:13.3px;color:#ffffff;font-weight:bold;">Department</div>
<div class="a" style="left:1147.5px;top:878.96px;width:1px;height:21.63px;background:#a9a78a;"></div>
<div class="t" style="left:1286.8px;top:883.5600000000001px;font-size:13.3px;color:#ffffff;font-weight:bold;">Hire Date</div>
<div class="a" style="left:1282.8px;top:878.96px;width:1px;height:21.63px;background:#a9a78a;"></div>
<div class="t" style="left:1397.3px;top:883.5600000000001px;font-size:13.3px;color:#ffffff;font-weight:bold;">Status</div>
<div class="a" style="left:1393.3px;top:878.96px;width:1px;height:21.63px;background:#a9a78a;"></div>
<div class="t" style="left:1494.3px;top:883.5600000000001px;font-size:13.3px;color:#ffffff;font-weight:bold;">NOTES</div>
<div class="a" style="left:1490.3px;top:878.96px;width:1px;height:21.63px;background:#a9a78a;"></div>
<div class="a" style="left:96.5px;top:921.72px;width:1811.2px;height:1px;background:#e2e2e2;"></div>
<svg style="left:954.8px;top:909.7px" width="7.400" height="3.900" viewBox="0 0 8 4.500"><path d="M0 0h8L4 4.500z" fill="#70757a"/></svg>
<svg style="left:1268.3px;top:909.7px" width="7.400" height="3.900" viewBox="0 0 8 4.500"><path d="M0 0h8L4 4.500z" fill="#70757a"/></svg>
<svg style="left:1475.8px;top:909.7px" width="7.400" height="3.900" viewBox="0 0 8 4.500"><path d="M0 0h8L4 4.500z" fill="#70757a"/></svg>
<div class="t" style="left:100.0px;top:905.5899999999999px;font-size:13.4px;color:#333333;">FirstName #1</div>
<div class="t" style="left:228.8px;top:905.5899999999999px;font-size:13.4px;color:#333333;">LastName #1</div>
<div class="t" style="left:371.1px;top:905.5899999999999px;font-size:13.4px;color:#333333;">Email1@gmail.com</div>
<div class="t" style="left:513.5px;top:905.5899999999999px;font-size:13.4px;color:#333333;">012-345-678</div>
<div class="t" style="left:629.3px;top:905.5899999999999px;font-size:13.4px;color:#333333;">Physical Address #1</div>
<div class="t" style="left:843.5px;top:905.5899999999999px;font-size:13.4px;color:#333333;">Part-time</div>
<div class="t" style="left:973.3px;top:905.5899999999999px;font-size:13.4px;color:#333333;">Junior Sales</div>
<div class="t" style="left:1151.5px;top:905.5899999999999px;font-size:13.4px;color:#333333;">Sales</div>
<div class="t" style="left:1283.3px;top:905.5899999999999px;font-size:13.4px;color:#333333;width:107.0px;text-align:right;">20 Jan 2020</div>
<div class="t" style="left:1397.3px;top:905.5899999999999px;font-size:13.4px;color:#333333;">Nonexempt</div>
<div class="a" style="left:96.5px;top:922.22px;width:1811.2px;height:21.63px;background:#ede3d9;"></div>
<div class="a" style="left:96.5px;top:943.3499999999999px;width:1811.2px;height:1px;background:#e4e0da;"></div>
<svg style="left:954.8px;top:931.3px" width="7.400" height="3.900" viewBox="0 0 8 4.500"><path d="M0 0h8L4 4.500z" fill="#a26c38"/></svg>
<svg style="left:1268.3px;top:931.3px" width="7.400" height="3.900" viewBox="0 0 8 4.500"><path d="M0 0h8L4 4.500z" fill="#a26c38"/></svg>
<svg style="left:1475.8px;top:931.3px" width="7.400" height="3.900" viewBox="0 0 8 4.500"><path d="M0 0h8L4 4.500z" fill="#a26c38"/></svg>
<div class="t" style="left:100.0px;top:927.22px;font-size:13.4px;color:#333333;">FirstName #2</div>
<div class="t" style="left:228.8px;top:927.22px;font-size:13.4px;color:#333333;">LastName #2</div>
<div class="t" style="left:371.1px;top:927.22px;font-size:13.4px;color:#333333;">Email2@gmail.com</div>
<div class="t" style="left:513.5px;top:927.22px;font-size:13.4px;color:#333333;">012-345-679</div>
<div class="t" style="left:629.3px;top:927.22px;font-size:13.4px;color:#333333;">Physical Address #2</div>
<div class="t" style="left:843.5px;top:927.22px;font-size:13.4px;color:#333333;">Full-time, Perman</div>
<div class="t" style="left:973.3px;top:927.22px;font-size:13.4px;color:#333333;">Senior Sales</div>
<div class="t" style="left:1151.5px;top:927.22px;font-size:13.4px;color:#333333;">Sales</div>
<div class="t" style="left:1283.3px;top:927.22px;font-size:13.4px;color:#333333;width:107.0px;text-align:right;">8 Mar 2019</div>
<div class="t" style="left:1397.3px;top:927.22px;font-size:13.4px;color:#333333;">Nonexempt</div>
<div class="a" style="left:96.5px;top:964.98px;width:1811.2px;height:1px;background:#e2e2e2;"></div>
<svg style="left:954.8px;top:953.0px" width="7.400" height="3.900" viewBox="0 0 8 4.500"><path d="M0 0h8L4 4.500z" fill="#70757a"/></svg>
<svg style="left:1268.3px;top:953.0px" width="7.400" height="3.900" viewBox="0 0 8 4.500"><path d="M0 0h8L4 4.500z" fill="#70757a"/></svg>
<svg style="left:1475.8px;top:953.0px" width="7.400" height="3.900" viewBox="0 0 8 4.500"><path d="M0 0h8L4 4.500z" fill="#70757a"/></svg>
<div class="t" style="left:100.0px;top:948.8499999999999px;font-size:13.4px;color:#333333;">FirstName #3</div>
<div class="t" style="left:228.8px;top:948.8499999999999px;font-size:13.4px;color:#333333;">LastName #3</div>
<div class="t" style="left:371.1px;top:948.8499999999999px;font-size:13.4px;color:#333333;">Email3@gmail.com</div>
<div class="t" style="left:513.5px;top:948.8499999999999px;font-size:13.4px;color:#333333;">012-345-680</div>
<div class="t" style="left:629.3px;top:948.8499999999999px;font-size:13.4px;color:#333333;">Physical Address #3</div>
<div class="t" style="left:843.5px;top:948.8499999999999px;font-size:13.4px;color:#333333;">Full-time, Perman</div>
<div class="t" style="left:973.3px;top:948.8499999999999px;font-size:13.4px;color:#333333;">Junior Operation</div>
<div class="t" style="left:1151.5px;top:948.8499999999999px;font-size:13.4px;color:#333333;">Operation</div>
<div class="t" style="left:1283.3px;top:948.8499999999999px;font-size:13.4px;color:#333333;width:107.0px;text-align:right;">3 Jan 2022</div>
<div class="t" style="left:1397.3px;top:948.8499999999999px;font-size:13.4px;color:#333333;">Nonexempt</div>
<div class="a" style="left:96.5px;top:965.48px;width:1811.2px;height:21.63px;background:#ede3d9;"></div>
<div class="a" style="left:96.5px;top:986.6099999999999px;width:1811.2px;height:1px;background:#e4e0da;"></div>
<svg style="left:954.8px;top:974.6px" width="7.400" height="3.900" viewBox="0 0 8 4.500"><path d="M0 0h8L4 4.500z" fill="#a26c38"/></svg>
<svg style="left:1268.3px;top:974.6px" width="7.400" height="3.900" viewBox="0 0 8 4.500"><path d="M0 0h8L4 4.500z" fill="#a26c38"/></svg>
<svg style="left:1475.8px;top:974.6px" width="7.400" height="3.900" viewBox="0 0 8 4.500"><path d="M0 0h8L4 4.500z" fill="#a26c38"/></svg>
<div class="t" style="left:100.0px;top:970.48px;font-size:13.4px;color:#333333;">FirstName #4</div>
<div class="t" style="left:228.8px;top:970.48px;font-size:13.4px;color:#333333;">LastName #4</div>
<div class="t" style="left:371.1px;top:970.48px;font-size:13.4px;color:#333333;">Email4@gmail.com</div>
<div class="t" style="left:513.5px;top:970.48px;font-size:13.4px;color:#333333;">012-345-681</div>
<div class="t" style="left:629.3px;top:970.48px;font-size:13.4px;color:#333333;">Physical Address #4</div>
<div class="t" style="left:843.5px;top:970.48px;font-size:13.4px;color:#333333;">Full-time, Contrac</div>
<div class="t" style="left:973.3px;top:970.48px;font-size:13.4px;color:#333333;">Sales Manager</div>
<div class="t" style="left:1151.5px;top:970.48px;font-size:13.4px;color:#333333;">Sales</div>
<div class="t" style="left:1283.3px;top:970.48px;font-size:13.4px;color:#333333;width:107.0px;text-align:right;">20 Feb 2022</div>
<div class="t" style="left:1397.3px;top:970.48px;font-size:13.4px;color:#333333;">Exempt</div>
<div class="a" style="left:96.5px;top:1008.24px;width:1811.2px;height:1px;background:#e2e2e2;"></div>
<svg style="left:954.8px;top:996.2px" width="7.400" height="3.900" viewBox="0 0 8 4.500"><path d="M0 0h8L4 4.500z" fill="#70757a"/></svg>
<svg style="left:1268.3px;top:996.2px" width="7.400" height="3.900" viewBox="0 0 8 4.500"><path d="M0 0h8L4 4.500z" fill="#70757a"/></svg>
<svg style="left:1475.8px;top:996.2px" width="7.400" height="3.900" viewBox="0 0 8 4.500"><path d="M0 0h8L4 4.500z" fill="#70757a"/></svg>
<div class="t" style="left:100.0px;top:992.1099999999999px;font-size:13.4px;color:#333333;">FirstName #5</div>
<div class="t" style="left:228.8px;top:992.1099999999999px;font-size:13.4px;color:#333333;">LastName #5</div>
<div class="t" style="left:371.1px;top:992.1099999999999px;font-size:13.4px;color:#333333;">Email5@gmail.com</div>
<div class="t" style="left:513.5px;top:992.1099999999999px;font-size:13.4px;color:#333333;">012-345-682</div>
<div class="t" style="left:629.3px;top:992.1099999999999px;font-size:13.4px;color:#333333;">Physical Address #5</div>
<div class="t" style="left:843.5px;top:992.1099999999999px;font-size:13.4px;color:#333333;">Part-time</div>
<div class="t" style="left:973.3px;top:992.1099999999999px;font-size:13.4px;color:#333333;">Junior Accounting</div>
<div class="t" style="left:1151.5px;top:992.1099999999999px;font-size:13.4px;color:#333333;">Accounting</div>
<div class="t" style="left:1283.3px;top:992.1099999999999px;font-size:13.4px;color:#333333;width:107.0px;text-align:right;">3 Jan 2017</div>
<div class="t" style="left:1397.3px;top:992.1099999999999px;font-size:13.4px;color:#333333;">Nonexempt</div>
<div class="a" style="left:96.5px;top:1008.74px;width:1811.2px;height:21.63px;background:#ede3d9;"></div>
<div class="a" style="left:96.5px;top:1029.87px;width:1811.2px;height:1px;background:#e4e0da;"></div>
<svg style="left:954.8px;top:1017.9px" width="7.400" height="3.900" viewBox="0 0 8 4.500"><path d="M0 0h8L4 4.500z" fill="#a26c38"/></svg>
<svg style="left:1268.3px;top:1017.9px" width="7.400" height="3.900" viewBox="0 0 8 4.500"><path d="M0 0h8L4 4.500z" fill="#a26c38"/></svg>
<svg style="left:1475.8px;top:1017.9px" width="7.400" height="3.900" viewBox="0 0 8 4.500"><path d="M0 0h8L4 4.500z" fill="#a26c38"/></svg>
<div class="t" style="left:100.0px;top:1013.74px;font-size:13.4px;color:#333333;">FirstName #6</div>
<div class="t" style="left:228.8px;top:1013.74px;font-size:13.4px;color:#333333;">LastName #6</div>
<div class="t" style="left:371.1px;top:1013.74px;font-size:13.4px;color:#333333;">Email6@gmail.com</div>
<div class="t" style="left:513.5px;top:1013.74px;font-size:13.4px;color:#333333;">012-345-683</div>
<div class="t" style="left:629.3px;top:1013.74px;font-size:13.4px;color:#333333;">Physical Address #6</div>
<div class="t" style="left:843.5px;top:1013.74px;font-size:13.4px;color:#333333;">Full-time, Perman</div>
<div class="t" style="left:973.3px;top:1013.74px;font-size:13.4px;color:#333333;">Human Resource Manager</div>
<div class="t" style="left:1151.5px;top:1013.74px;font-size:13.4px;color:#333333;">Human Resource</div>
<div class="t" style="left:1283.3px;top:1013.74px;font-size:13.4px;color:#333333;width:107.0px;text-align:right;">2 Mar 2021</div>
<div class="t" style="left:1397.3px;top:1013.74px;font-size:13.4px;color:#333333;">Exempt</div>
<div class="a" style="left:96.5px;top:1051.5px;width:1811.2px;height:1px;background:#e2e2e2;"></div>
<svg style="left:954.8px;top:1039.5px" width="7.400" height="3.900" viewBox="0 0 8 4.500"><path d="M0 0h8L4 4.500z" fill="#70757a"/></svg>
<svg style="left:1268.3px;top:1039.5px" width="7.400" height="3.900" viewBox="0 0 8 4.500"><path d="M0 0h8L4 4.500z" fill="#70757a"/></svg>
<svg style="left:1475.8px;top:1039.5px" width="7.400" height="3.900" viewBox="0 0 8 4.500"><path d="M0 0h8L4 4.500z" fill="#70757a"/></svg>
<div class="a" style="left:96.5px;top:1052.0px;width:1811.2px;height:21.63px;background:#ede3d9;"></div>
<div class="a" style="left:96.5px;top:1073.1299999999999px;width:1811.2px;height:1px;background:#e4e0da;"></div>
<svg style="left:954.8px;top:1061.1px" width="7.400" height="3.900" viewBox="0 0 8 4.500"><path d="M0 0h8L4 4.500z" fill="#a26c38"/></svg>
<svg style="left:1268.3px;top:1061.1px" width="7.400" height="3.900" viewBox="0 0 8 4.500"><path d="M0 0h8L4 4.500z" fill="#a26c38"/></svg>
<svg style="left:1475.8px;top:1061.1px" width="7.400" height="3.900" viewBox="0 0 8 4.500"><path d="M0 0h8L4 4.500z" fill="#a26c38"/></svg>
<div class="a" style="left:96.5px;top:1094.76px;width:1811.2px;height:1px;background:#e2e2e2;"></div>
<svg style="left:954.8px;top:1082.7px" width="7.400" height="3.900" viewBox="0 0 8 4.500"><path d="M0 0h8L4 4.500z" fill="#70757a"/></svg>
<svg style="left:1268.3px;top:1082.7px" width="7.400" height="3.900" viewBox="0 0 8 4.500"><path d="M0 0h8L4 4.500z" fill="#70757a"/></svg>
<svg style="left:1475.8px;top:1082.7px" width="7.400" height="3.900" viewBox="0 0 8 4.500"><path d="M0 0h8L4 4.500z" fill="#70757a"/></svg>
<div class="a" style="left:96.5px;top:1095.26px;width:1811.2px;height:21.63px;background:#ede3d9;"></div>
<div class="a" style="left:96.5px;top:1116.3899999999999px;width:1811.2px;height:1px;background:#e4e0da;"></div>
<svg style="left:954.8px;top:1104.4px" width="7.400" height="3.900" viewBox="0 0 8 4.500"><path d="M0 0h8L4 4.500z" fill="#a26c38"/></svg>
<svg style="left:1268.3px;top:1104.4px" width="7.400" height="3.900" viewBox="0 0 8 4.500"><path d="M0 0h8L4 4.500z" fill="#a26c38"/></svg>
<svg style="left:1475.8px;top:1104.4px" width="7.400" height="3.900" viewBox="0 0 8 4.500"><path d="M0 0h8L4 4.500z" fill="#a26c38"/></svg>
<div class="a" style="left:96.5px;top:1138.02px;width:1811.2px;height:1px;background:#e2e2e2;"></div>
<svg style="left:954.8px;top:1126.0px" width="7.400" height="3.900" viewBox="0 0 8 4.500"><path d="M0 0h8L4 4.500z" fill="#70757a"/></svg>
<svg style="left:1268.3px;top:1126.0px" width="7.400" height="3.900" viewBox="0 0 8 4.500"><path d="M0 0h8L4 4.500z" fill="#70757a"/></svg>
<svg style="left:1475.8px;top:1126.0px" width="7.400" height="3.900" viewBox="0 0 8 4.500"><path d="M0 0h8L4 4.500z" fill="#70757a"/></svg>
<div class="a" style="left:96.5px;top:1138.52px;width:1811.2px;height:21.63px;background:#ede3d9;"></div>
<div class="a" style="left:96.5px;top:1159.65px;width:1811.2px;height:1px;background:#e4e0da;"></div>
<svg style="left:954.8px;top:1147.6px" width="7.400" height="3.900" viewBox="0 0 8 4.500"><path d="M0 0h8L4 4.500z" fill="#a26c38"/></svg>
<svg style="left:1268.3px;top:1147.6px" width="7.400" height="3.900" viewBox="0 0 8 4.500"><path d="M0 0h8L4 4.500z" fill="#a26c38"/></svg>
<svg style="left:1475.8px;top:1147.6px" width="7.400" height="3.900" viewBox="0 0 8 4.500"><path d="M0 0h8L4 4.500z" fill="#a26c38"/></svg>
<div class="a" style="left:96.5px;top:1181.28px;width:1811.2px;height:1px;background:#e2e2e2;"></div>
<svg style="left:954.8px;top:1169.3px" width="7.400" height="3.900" viewBox="0 0 8 4.500"><path d="M0 0h8L4 4.500z" fill="#70757a"/></svg>
<svg style="left:1268.3px;top:1169.3px" width="7.400" height="3.900" viewBox="0 0 8 4.500"><path d="M0 0h8L4 4.500z" fill="#70757a"/></svg>
<svg style="left:1475.8px;top:1169.3px" width="7.400" height="3.900" viewBox="0 0 8 4.500"><path d="M0 0h8L4 4.500z" fill="#70757a"/></svg>
<div class="a" style="left:96.5px;top:1181.78px;width:1811.2px;height:21.63px;background:#ede3d9;"></div>
<div class="a" style="left:96.5px;top:1202.9099999999999px;width:1811.2px;height:1px;background:#e4e0da;"></div>
<svg style="left:954.8px;top:1190.9px" width="7.400" height="3.900" viewBox="0 0 8 4.500"><path d="M0 0h8L4 4.500z" fill="#a26c38"/></svg>
<svg style="left:1268.3px;top:1190.9px" width="7.400" height="3.900" viewBox="0 0 8 4.500"><path d="M0 0h8L4 4.500z" fill="#a26c38"/></svg>
<svg style="left:1475.8px;top:1190.9px" width="7.400" height="3.900" viewBox="0 0 8 4.500"><path d="M0 0h8L4 4.500z" fill="#a26c38"/></svg>
<div class="a" style="left:96.5px;top:1224.54px;width:1811.2px;height:1px;background:#e2e2e2;"></div>
<svg style="left:954.8px;top:1212.5px" width="7.400" height="3.900" viewBox="0 0 8 4.500"><path d="M0 0h8L4 4.500z" fill="#70757a"/></svg>
<svg style="left:1268.3px;top:1212.5px" width="7.400" height="3.900" viewBox="0 0 8 4.500"><path d="M0 0h8L4 4.500z" fill="#70757a"/></svg>
<svg style="left:1475.8px;top:1212.5px" width="7.400" height="3.900" viewBox="0 0 8 4.500"><path d="M0 0h8L4 4.500z" fill="#70757a"/></svg>
<div class="a" style="left:96.5px;top:1225.04px;width:1811.2px;height:21.63px;background:#ede3d9;"></div>
<div class="a" style="left:96.5px;top:1246.17px;width:1811.2px;height:1px;background:#e4e0da;"></div>
<svg style="left:954.8px;top:1234.2px" width="7.400" height="3.900" viewBox="0 0 8 4.500"><path d="M0 0h8L4 4.500z" fill="#a26c38"/></svg>
<svg style="left:1268.3px;top:1234.2px" width="7.400" height="3.900" viewBox="0 0 8 4.500"><path d="M0 0h8L4 4.500z" fill="#a26c38"/></svg>
<svg style="left:1475.8px;top:1234.2px" width="7.400" height="3.900" viewBox="0 0 8 4.500"><path d="M0 0h8L4 4.500z" fill="#a26c38"/></svg>
<div class="a" style="left:96.5px;top:1267.8px;width:1811.2px;height:1px;background:#e2e2e2;"></div>
<svg style="left:954.8px;top:1255.8px" width="7.400" height="3.900" viewBox="0 0 8 4.500"><path d="M0 0h8L4 4.500z" fill="#70757a"/></svg>
<svg style="left:1268.3px;top:1255.8px" width="7.400" height="3.900" viewBox="0 0 8 4.500"><path d="M0 0h8L4 4.500z" fill="#70757a"/></svg>
<svg style="left:1475.8px;top:1255.8px" width="7.400" height="3.900" viewBox="0 0 8 4.500"><path d="M0 0h8L4 4.500z" fill="#70757a"/></svg>
<div class="a" style="left:96.5px;top:1268.3px;width:1811.2px;height:21.63px;background:#ede3d9;"></div>
<div class="a" style="left:96.5px;top:1289.4299999999998px;width:1811.2px;height:1px;background:#e4e0da;"></div>
<svg style="left:954.8px;top:1277.4px" width="7.400" height="3.900" viewBox="0 0 8 4.500"><path d="M0 0h8L4 4.500z" fill="#a26c38"/></svg>
<svg style="left:1268.3px;top:1277.4px" width="7.400" height="3.900" viewBox="0 0 8 4.500"><path d="M0 0h8L4 4.500z" fill="#a26c38"/></svg>
<svg style="left:1475.8px;top:1277.4px" width="7.400" height="3.900" viewBox="0 0 8 4.500"><path d="M0 0h8L4 4.500z" fill="#a26c38"/></svg>
<div class="a" style="left:96.0px;top:900.5899999999999px;width:1px;height:389.3399999999999px;background:#e2e0dc;"></div>
<div class="a" style="left:224.8px;top:900.5899999999999px;width:1px;height:389.3399999999999px;background:#e2e0dc;"></div>
<div class="a" style="left:367.1px;top:900.5899999999999px;width:1px;height:389.3399999999999px;background:#e2e0dc;"></div>
<div class="a" style="left:509.5px;top:900.5899999999999px;width:1px;height:389.3399999999999px;background:#e2e0dc;"></div>
<div class="a" style="left:625.3px;top:900.5899999999999px;width:1px;height:389.3399999999999px;background:#e2e0dc;"></div>
<div class="a" style="left:839.5px;top:900.5899999999999px;width:1px;height:389.3399999999999px;background:#e2e0dc;"></div>
<div class="a" style="left:969.3px;top:900.5899999999999px;width:1px;height:389.3399999999999px;background:#e2e0dc;"></div>
<div class="a" style="left:1147.5px;top:900.5899999999999px;width:1px;height:389.3399999999999px;background:#e2e0dc;"></div>
<div class="a" style="left:1282.8px;top:900.5899999999999px;width:1px;height:389.3399999999999px;background:#e2e0dc;"></div>
<div class="a" style="left:1393.3px;top:900.5899999999999px;width:1px;height:389.3399999999999px;background:#e2e0dc;"></div>
<div class="a" style="left:1490.3px;top:900.5899999999999px;width:1px;height:389.3399999999999px;background:#e2e0dc;"></div>
<div class="a" style="left:1907.2px;top:900.5899999999999px;width:1px;height:389.3399999999999px;background:#e2e0dc;"></div>
<div class="a" style="left:97px;top:631.1px;width:236px;height:236.89999999999998px;background:#ede3d9;"></div>
<div class="t" style="left:-85.30000000000001px;width:600px;text-align:center;top:642.05px;font-size:20.5px;color:#3c3c3c;font-weight:bold;">Total Employee</div>
<div class="t" style="left:-85.9px;width:600px;text-align:center;top:669.30px;font-size:181px;color:#202124;">6</div>
<div class="a" style="left:340.1px;top:631.1px;width:509.4px;height:236.89999999999998px;background:#ede3d9;"></div>
<div class="t" style="left:352.3px;top:642.6px;font-size:14.3px;color:#444444;font-weight:bold;">By Employment Type</div>
<div class="t" style="left:343px;top:831.8px;font-size:12.3px;color:#444444;width:30px;text-align:right;">0</div>
<div class="a" style="left:379.6px;top:782.0333333333333px;width:457.9px;height:1px;background:#cdc8c0;"></div>
<div class="t" style="left:343px;top:776.4333333333333px;font-size:12.3px;color:#444444;width:30px;text-align:right;">1</div>
<div class="a" style="left:379.6px;top:726.6666666666666px;width:457.9px;height:1px;background:#cdc8c0;"></div>
<div class="t" style="left:343px;top:721.0666666666666px;font-size:12.3px;color:#444444;width:30px;text-align:right;">2</div>
<div class="a" style="left:379.6px;top:671.3px;width:457.9px;height:1px;background:#cdc8c0;"></div>
<div class="t" style="left:343px;top:665.6999999999999px;font-size:12.3px;color:#444444;width:30px;text-align:right;">3</div>
<div class="a" style="left:427.1px;top:727.1666666666666px;width:88.10000000000002px;height:110.73333333333335px;background:#7d7a52;"></div>
<div class="t" style="left:171.15000000000003px;width:600px;text-align:center;top:732.52px;font-size:12.3px;color:#ffffff;font-weight:bold;">2</div>
<div class="t" style="left:171.15000000000003px;width:600px;text-align:center;top:844.03px;font-size:12.35px;color:#3c3c3c;font-weight:bold;">Part-time</div>
<div class="a" style="left:564px;top:671.8px;width:89.20000000000005px;height:166.10000000000002px;background:#7d7a52;"></div>
<div class="t" style="left:308.6px;width:600px;text-align:center;top:677.15px;font-size:12.3px;color:#ffffff;font-weight:bold;">3</div>
<div class="t" style="left:308.6px;width:600px;text-align:center;top:844.03px;font-size:12.35px;color:#3c3c3c;font-weight:bold;">Full-time, Permanent</div>
<div class="a" style="left:701.5px;top:782.5333333333333px;width:88.10000000000002px;height:55.366666666666674px;background:#7d7a52;"></div>
<div class="t" style="left:445.54999999999995px;width:600px;text-align:center;top:787.88px;font-size:12.3px;color:#ffffff;font-weight:bold;">1</div>
<div class="t" style="left:445.54999999999995px;width:600px;text-align:center;top:844.03px;font-size:12.35px;color:#3c3c3c;font-weight:bold;">Full-time, Contract</div>
<div class="a" style="left:379.6px;top:837.4px;width:457.9px;height:1.3px;background:#666666;"></div>
<div class="a" style="left:857px;top:631.1px;width:509.4000000000001px;height:236.89999999999998px;background:#ede3d9;"></div>
<div class="t" style="left:869px;top:642.6px;font-size:14.3px;color:#444444;font-weight:bold;">By Department</div>
<div class="t" style="left:859.5px;top:831.8px;font-size:12.3px;color:#444444;width:30px;text-align:right;">0</div>
<div class="a" style="left:896.2px;top:782.0333333333333px;width:458.0px;height:1px;background:#cdc8c0;"></div>
<div class="t" style="left:859.5px;top:776.4333333333333px;font-size:12.3px;color:#444444;width:30px;text-align:right;">1</div>
<div class="a" style="left:896.2px;top:726.6666666666666px;width:458.0px;height:1px;background:#cdc8c0;"></div>
<div class="t" style="left:859.5px;top:721.0666666666666px;font-size:12.3px;color:#444444;width:30px;text-align:right;">2</div>
<div class="a" style="left:896.2px;top:671.3px;width:458.0px;height:1px;background:#cdc8c0;"></div>
<div class="t" style="left:859.5px;top:665.6999999999999px;font-size:12.3px;color:#444444;width:30px;text-align:right;">3</div>
<div class="a" style="left:933.5px;top:671.8px;width:67.60000000000002px;height:166.10000000000002px;background:#d29778;"></div>
<div class="t" style="left:667.3px;width:600px;text-align:center;top:677.15px;font-size:12.3px;color:#111111;font-weight:bold;">3</div>
<div class="t" style="left:667.3px;width:600px;text-align:center;top:844.03px;font-size:12.35px;color:#3c3c3c;font-weight:bold;">Sales</div>
<div class="a" style="left:1038.9px;top:782.5333333333333px;width:67.29999999999995px;height:55.366666666666674px;background:#d29778;"></div>
<div class="t" style="left:772.5500000000002px;width:600px;text-align:center;top:787.88px;font-size:12.3px;color:#111111;font-weight:bold;">1</div>
<div class="t" style="left:772.5500000000002px;width:600px;text-align:center;top:844.03px;font-size:12.35px;color:#3c3c3c;font-weight:bold;">Operation</div>
<div class="a" style="left:1143.7px;top:782.5333333333333px;width:67.79999999999995px;height:55.366666666666674px;background:#d29778;"></div>
<div class="t" style="left:877.5999999999999px;width:600px;text-align:center;top:787.88px;font-size:12.3px;color:#111111;font-weight:bold;">1</div>
<div class="t" style="left:877.5999999999999px;width:600px;text-align:center;top:844.03px;font-size:12.35px;color:#3c3c3c;font-weight:bold;">Accounting</div>
<div class="a" style="left:1248.8px;top:782.5333333333333px;width:67.5px;height:55.366666666666674px;background:#d29778;"></div>
<div class="t" style="left:982.55px;width:600px;text-align:center;top:787.88px;font-size:12.3px;color:#111111;font-weight:bold;">1</div>
<div class="t" style="left:982.55px;width:600px;text-align:center;top:844.03px;font-size:12.35px;color:#3c3c3c;font-weight:bold;">Human Resource</div>
<div class="a" style="left:896.2px;top:837.4px;width:458.0px;height:1.3px;background:#666666;"></div>
<div class="a" style="left:1374px;top:631.1px;width:509.20000000000005px;height:236.89999999999998px;background:#ede3d9;"></div>
<div class="t" style="left:1385.4px;top:642.6px;font-size:14.3px;color:#444444;font-weight:bold;">By Status</div>
<div class="t" style="left:1376.3px;top:831.8px;font-size:12.3px;color:#444444;width:30px;text-align:right;">0</div>
<div class="a" style="left:1412.5px;top:795.875px;width:458.5px;height:1px;background:#cdc8c0;"></div>
<div class="t" style="left:1376.3px;top:790.275px;font-size:12.3px;color:#444444;width:30px;text-align:right;">1</div>
<div class="a" style="left:1412.5px;top:754.3499999999999px;width:458.5px;height:1px;background:#cdc8c0;"></div>
<div class="t" style="left:1376.3px;top:748.7499999999999px;font-size:12.3px;color:#444444;width:30px;text-align:right;">2</div>
<div class="a" style="left:1412.5px;top:712.8249999999999px;width:458.5px;height:1px;background:#cdc8c0;"></div>
<div class="t" style="left:1376.3px;top:707.2249999999999px;font-size:12.3px;color:#444444;width:30px;text-align:right;">3</div>
<div class="a" style="left:1412.5px;top:671.3px;width:458.5px;height:1px;background:#cdc8c0;"></div>
<div class="t" style="left:1376.3px;top:665.6999999999999px;font-size:12.3px;color:#444444;width:30px;text-align:right;">4</div>
<div class="a" style="left:1480.9px;top:671.8px;width:126.59999999999991px;height:166.10000000000002px;background:#8f6149;"></div>
<div class="t" style="left:1244.2px;width:600px;text-align:center;top:677.15px;font-size:12.3px;color:#ffffff;font-weight:bold;">4</div>
<div class="t" style="left:1244.2px;width:600px;text-align:center;top:844.03px;font-size:12.35px;color:#3c3c3c;font-weight:bold;">Nonexempt</div>
<div class="a" style="left:1677px;top:754.8499999999999px;width:126.59999999999991px;height:83.05000000000007px;background:#8f6149;"></div>
<div class="t" style="left:1440.3px;width:600px;text-align:center;top:760.20px;font-size:12.3px;color:#ffffff;font-weight:bold;">2</div>
<div class="t" style="left:1440.3px;width:600px;text-align:center;top:844.03px;font-size:12.35px;color:#3c3c3c;font-weight:bold;">Exempt</div>
<div class="a" style="left:1412.5px;top:837.4px;width:458.5px;height:1.3px;background:#666666;"></div>
<div class="a" style="left:23px;top:1289.5px;width:1900px;height:13.5px;background:#ffffff;"></div>
<div class="a" style="left:23px;top:1289.5px;width:47.5px;height:14px;background:#f8f9fa;"></div>
<div class="a" style="left:71px;top:1289.5px;width:1842px;height:1px;background:#e6e6e6;"></div>
<div class="a" style="left:72px;top:1291.2px;width:895px;height:9.2px;background:#dadce0;border-radius:5px;"></div>
<div class="a" style="left:1880px;top:1290px;width:1px;height:13px;background:#e0e0e0;"></div>
<div class="a" style="left:1897px;top:1290px;width:1px;height:13px;background:#e0e0e0;"></div>
<div class="a" style="left:1912.5px;top:1290px;width:1px;height:13px;background:#e0e0e0;"></div>
<svg style="left:1886px;top:1293px" width="5" height="7" viewBox="0 0 5 7"><path d="M4.500 0v7L0 3.500z" fill="#80868b"/></svg>
<svg style="left:1902.500px;top:1293px" width="5" height="7" viewBox="0 0 5 7"><path d="M.5 0v7L5 3.500z" fill="#80868b"/></svg>
<div class="a" style="left:1913px;top:1257px;width:10px;height:1px;background:#e0e0e0;"></div>
<div class="a" style="left:1913px;top:1273px;width:10px;height:1px;background:#e0e0e0;"></div>
<svg style="left:1915px;top:1262.500px" width="7" height="5" viewBox="0 0 7 5"><path d="M0 4.500h7L3.500 0z" fill="#80868b"/></svg>
<svg style="left:1915px;top:1279px" width="7" height="5" viewBox="0 0 7 5"><path d="M0 .5h7L3.500 5z" fill="#80868b"/></svg>
<div class="a" style="left:23px;top:1302.8px;width:1900px;height:35.2px;background:#f9fbfd;"></div>
<div class="a" style="left:23px;top:1302.8px;width:1900px;height:1px;background:#e3e5e8;"></div>
<div class="a" style="left:81.5px;top:1322.0px;width:11px;height:1.5px;background:#444746;"></div>
<div class="a" style="left:86.25px;top:1317.2px;width:1.5px;height:11px;background:#444746;"></div>
<div class="a" style="left:120.8px;top:1317.6px;width:14.6px;height:1.9px;background:#444746;"></div>
<div class="a" style="left:120.8px;top:1322.1px;width:14.6px;height:1.9px;background:#444746;"></div>
<div class="a" style="left:120.8px;top:1326.6px;width:14.6px;height:1.9px;background:#444746;"></div>
<div class="t" style="left:174.2px;top:1316.2px;font-size:14.8px;color:#444746;letter-spacing:1.003px;-webkit-text-stroke:.3px #444746;">Instruction</div>
<svg style="left:264.5px;top:1321.5px" width="8" height="4.0" viewBox="0 0 10 5"><path d="M0 0h10L5 5z" fill="#444746"/></svg>
<div class="t" style="left:298.0px;top:1316.2px;font-size:14.8px;color:#444746;letter-spacing:0.993px;-webkit-text-stroke:.3px #444746;">Master</div>
<svg style="left:359.0px;top:1321.5px" width="8" height="4.0" viewBox="0 0 10 5"><path d="M0 0h10L5 5z" fill="#444746"/></svg>
<div class="a" style="left:380.2px;top:1303.5px;width:206.5px;height:34.5px;background:#e1e9f7;"></div>
<div class="t" style="left:392.2px;top:1316.2px;font-size:14.6px;color:#2457cf;font-weight:bold;letter-spacing:0.533px;">Employee Information</div>
<svg style="left:566.5px;top:1321.5px" width="8" height="4.0" viewBox="0 0 10 5"><path d="M0 0h10L5 5z" fill="#2457cf"/></svg>
<svg style="left:1828px;top:1313px" width="19" height="22" viewBox="0 0 19 22"><path d="M2 0h15a2 2 0 0 1 2 2v14a2 2 0 0 1-2 2h-4.500L9.500 21.500 6.500 18H2a2 2 0 0 1-2-2V2a2 2 0 0 1 2-2z" fill="#5f6368"/><path d="M9.500 3.500l1.700 4 4 1.700-4 1.700-1.700 4-1.700-4-4-1.700 4-1.700z" fill="#fff"/></svg>
<svg style="left:1892px;top:1318px" width="8" height="12" viewBox="0 0 8 12" fill="none" stroke="#444746" stroke-width="1.800"><path d="M6.500 1L1.500 6l5 5"/></svg>
<svg style="left:23px;top:1327px" width="4" height="11" viewBox="0 0 4 11"><path d="M0 0L3.500 11H0z" fill="#1c1a5e"/></svg>
</div></body></html>
